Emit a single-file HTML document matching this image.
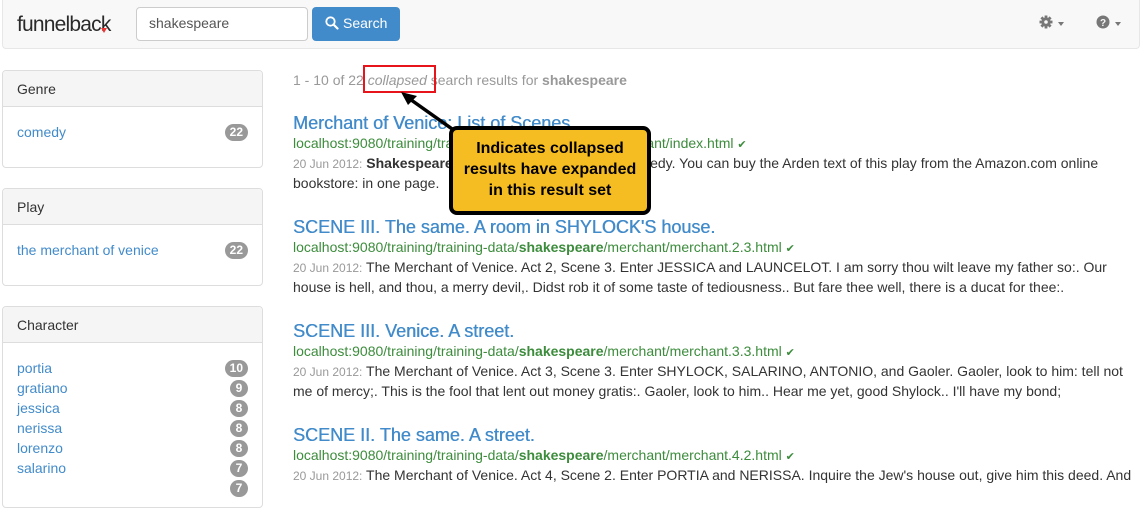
<!DOCTYPE html>
<html><head><meta charset="utf-8"><style>
body{margin:0;width:1145px;height:479px;overflow:hidden;background:#fff;font-family:"Liberation Sans",Arial,sans-serif;position:relative}
.a{position:absolute;white-space:nowrap}
.nav{position:absolute;left:2px;top:0;width:1136px;height:48px;background:#f8f8f8;border:1px solid #e7e7e7;border-top:none;border-radius:0 0 4px 4px}
.panel{position:absolute;left:2px;width:259px;border:1px solid #ddd;border-radius:4px;background:#fff}
.ph{height:35px;background:#f5f5f5;border-bottom:1px solid #ddd;font-size:14px;color:#333;line-height:36px;padding-left:14px;border-radius:4px 4px 0 0}
.lnk{color:#428bca;font-size:14px}
.badge{position:absolute;background:#999;color:#fff;font-size:12px;font-weight:bold;border-radius:10px;height:17px;line-height:17px;text-align:center;min-width:8px;padding:0 5px;right:14px}
.t{color:#428bca;font-size:18px;font-weight:normal;text-shadow:0.4px 0 0 #428bca}
.u{color:#3c8c3c;font-size:14px}
.s{color:#333;font-size:14px}
.d{color:#999;font-size:12px}
</style></head><body>
<div class="nav"></div>
<div class="a" style="left:17px;top:13px;font-size:21px;color:#2a2a2a;letter-spacing:-0.8px">funnelback</div>
<div class="a" style="left:101px;top:28px;width:0;height:0;border-left:3px solid transparent;border-right:3px solid transparent;border-top:5px solid #e33"></div>
<div class="a" style="left:136px;top:7px;width:170px;height:32px;border:1px solid #ccc;border-radius:4px;background:#fff"></div>
<div class="a" style="left:149px;top:15px;font-size:14px;color:#555">shakespeare</div>
<div class="a" style="left:312px;top:7px;width:88px;height:34px;background:#428bca;border-radius:4px;border:0"></div>
<svg class="a" style="left:325px;top:16px" width="14" height="14" viewBox="0 0 14 14"><circle cx="5.5" cy="5.5" r="4.2" fill="none" stroke="#fff" stroke-width="1.8"/><path d="M8.5 8.5L12.5 12.5" stroke="#fff" stroke-width="2.2" stroke-linecap="round"/></svg>
<div class="a" style="left:343px;top:15px;font-size:14px;color:#fff">Search</div>
<svg class="a" style="left:1039px;top:15px" width="14" height="14" viewBox="0 0 14 14"><g fill="#777"><circle cx="7" cy="7" r="4.6"/><rect x="5.6" y="0.5" width="2.8" height="13"/><rect x="0.5" y="5.6" width="13" height="2.8"/><rect x="5.6" y="0.5" width="2.8" height="13" transform="rotate(45 7 7)"/><rect x="5.6" y="0.5" width="2.8" height="13" transform="rotate(-45 7 7)"/></g><circle cx="7" cy="7" r="1.8" fill="#f8f8f8"/></svg>
<div class="a" style="left:1058px;top:22px;border-left:3.5px solid transparent;border-right:3.5px solid transparent;border-top:4px solid #777"></div>
<svg class="a" style="left:1096px;top:15px" width="14" height="14" viewBox="0 0 14 14"><circle cx="7" cy="7" r="6.5" fill="#777"/><text x="7" y="11" font-size="10" font-weight="bold" fill="#f8f8f8" text-anchor="middle" font-family="Liberation Sans">?</text></svg>
<div class="a" style="left:1115px;top:22px;border-left:3.5px solid transparent;border-right:3.5px solid transparent;border-top:4px solid #777"></div>

<div class="panel" style="top:70px;height:96px"><div class="ph">Genre</div>
<div class="a lnk" style="left:14px;top:53px">comedy</div><div class="badge" style="top:53px">22</div></div>
<div class="panel" style="top:188px;height:96px"><div class="ph">Play</div>
<div class="a lnk" style="left:14px;top:53px">the merchant of venice</div><div class="badge" style="top:53px">22</div></div>
<div class="panel" style="top:306px;height:200px"><div class="ph">Character</div>
<div class="a lnk" style="left:14px;top:53px">portia</div><div class="badge" style="top:53px">10</div>
<div class="a lnk" style="left:14px;top:73px">gratiano</div><div class="badge" style="top:73px">9</div>
<div class="a lnk" style="left:14px;top:93px">jessica</div><div class="badge" style="top:93px">8</div>
<div class="a lnk" style="left:14px;top:113px">nerissa</div><div class="badge" style="top:113px">8</div>
<div class="a lnk" style="left:14px;top:133px">lorenzo</div><div class="badge" style="top:133px">8</div>
<div class="a lnk" style="left:14px;top:153px">salarino</div><div class="badge" style="top:153px">7</div>
<div class="badge" style="top:173px">7</div></div>

<div class="a" style="left:293px;top:72px;font-size:14px;color:#999">1 - 10 of 22 <i>collapsed</i> search results for <b>shakespeare</b></div>

<div class="a t" style="left:293px;top:113px">Merchant of Venice: List of Scenes</div>
<div class="a u" style="left:293px;top:135px">localhost:9080/training/training-data/<b>shakespeare</b>/merchant/index.html <span style="font-size:11px">&#10004;</span></div>
<div class="a s" style="left:293px;top:155px"><span class="d">20 Jun 2012:</span> <b>Shakespeare</b> The Merchant of Venice, a comedy. You can buy the Arden text of this play from the Amazon.com online</div>
<div class="a s" style="left:293px;top:175px">bookstore: in one page.</div>

<div class="a t" style="left:293px;top:217px">SCENE III. The same. A room in SHYLOCK'S house.</div>
<div class="a u" style="left:293px;top:239px">localhost:9080/training/training-data/<b>shakespeare</b>/merchant/merchant.2.3.html <span style="font-size:11px">&#10004;</span></div>
<div class="a s" style="left:293px;top:259px"><span class="d">20 Jun 2012:</span> The Merchant of Venice. Act 2, Scene 3. Enter JESSICA and LAUNCELOT. I am sorry thou wilt leave my father so:. Our</div>
<div class="a s" style="left:293px;top:279px">house is hell, and thou, a merry devil,. Didst rob it of some taste of tediousness.. But fare thee well, there is a ducat for thee:.</div>

<div class="a t" style="left:293px;top:321px">SCENE III. Venice. A street.</div>
<div class="a u" style="left:293px;top:343px">localhost:9080/training/training-data/<b>shakespeare</b>/merchant/merchant.3.3.html <span style="font-size:11px">&#10004;</span></div>
<div class="a s" style="left:293px;top:363px"><span class="d">20 Jun 2012:</span> The Merchant of Venice. Act 3, Scene 3. Enter SHYLOCK, SALARINO, ANTONIO, and Gaoler. Gaoler, look to him: tell not</div>
<div class="a s" style="left:293px;top:383px">me of mercy;. This is the fool that lent out money gratis:. Gaoler, look to him.. Hear me yet, good Shylock.. I'll have my bond;</div>

<div class="a t" style="left:293px;top:425px">SCENE II. The same. A street.</div>
<div class="a u" style="left:293px;top:447px">localhost:9080/training/training-data/<b>shakespeare</b>/merchant/merchant.4.2.html <span style="font-size:11px">&#10004;</span></div>
<div class="a s" style="left:293px;top:467px"><span class="d">20 Jun 2012:</span> The Merchant of Venice. Act 4, Scene 2. Enter PORTIA and NERISSA. Inquire the Jew's house out, give him this deed. And</div>

<div class="a" style="left:363px;top:65px;width:69px;height:24px;border:2px solid #e8141b"></div>
<svg class="a" style="left:395px;top:85px" width="80" height="60" viewBox="0 0 80 60"><path d="M60 46L12 12" stroke="#000" stroke-width="3.5"/><path d="M6 7L22 11L13 20Z" fill="#000"/></svg>
<div class="a" style="left:449px;top:126px;width:194px;background:#f5bd22;border:4px solid #000;border-radius:8px;text-align:center;font-family:'Liberation Sans',sans-serif;font-weight:bold;font-size:16px;line-height:21px;color:#000;white-space:nowrap;padding-top:8px;height:73px">Indicates collapsed<br>results have expanded<br>in this result set</div>
</body></html>
